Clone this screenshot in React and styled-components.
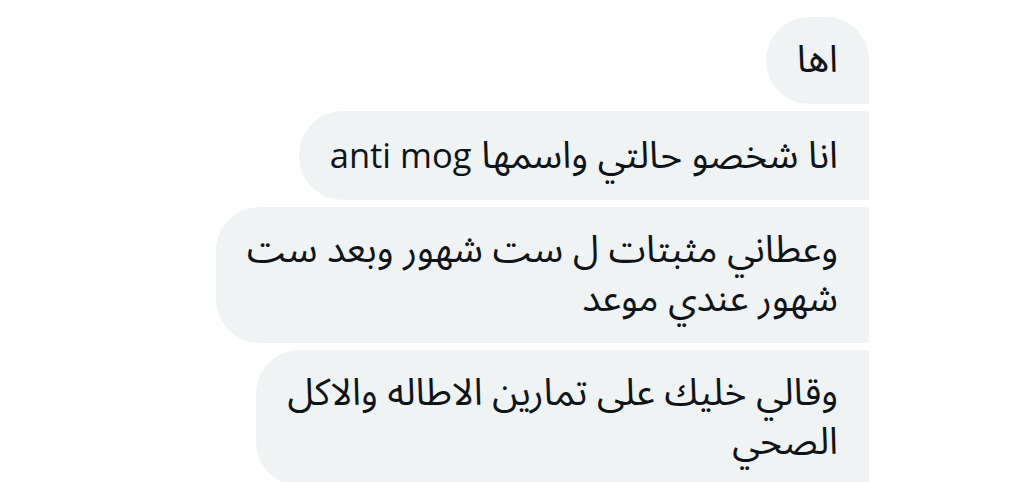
import styled, { createGlobalStyle } from "styled-components";

const GlobalStyle = createGlobalStyle`
  html, body {
    margin: 0;
    padding: 0;
    background: #ffffff;
    overflow: hidden;
  }
`;

const Wrapper = styled.div`
  width: 1024px;
  height: 482px;
  overflow: hidden;
  box-sizing: border-box;
  padding: 17px 155px 0 0;
  display: flex;
  flex-direction: column;
  align-items: flex-end;
  gap: 7px;
  font-family: "Noto Sans Arabic", "Noto Sans", "DejaVu Sans", sans-serif;
`;

const Bubble = styled.div`
  direction: rtl;
  box-sizing: border-box;
  padding: 19px 31px;
  background: #eff3f4;
  color: #0f1419;
  font-size: 37.5px;
  line-height: 49px;
  border-radius: 44px ${({ $first }) => ($first ? "44px" : "3px")} 3px 44px;
`;

const Line = styled.div`
  white-space: nowrap;
`;

const Latin = styled.span`
  font-family: "Open Sans", "Noto Sans", sans-serif;
  font-size: 34.5px;
`;

const messages = [
  { id: 1, lines: ["اها"] },
  {
    id: 2,
    lines: [
      <>
        انا شخصو حالتي واسمها <Latin>anti mog</Latin>
      </>,
    ],
  },
  { id: 3, lines: ["وعطاني مثبتات ل ست شهور وبعد ست", "شهور عندي موعد"] },
  { id: 4, lines: ["وقالي خليك على تمارين الاطاله والاكل", "الصحي"] },
];

const App = () => {
  return (
    <>
      <GlobalStyle />
      <Wrapper>
        {messages.map((m, i) => (
          <Bubble key={m.id} $first={i === 0}>
            {m.lines.map((line, j) => (
              <Line key={j}>{line}</Line>
            ))}
          </Bubble>
        ))}
      </Wrapper>
    </>
  );
};

export default App;
